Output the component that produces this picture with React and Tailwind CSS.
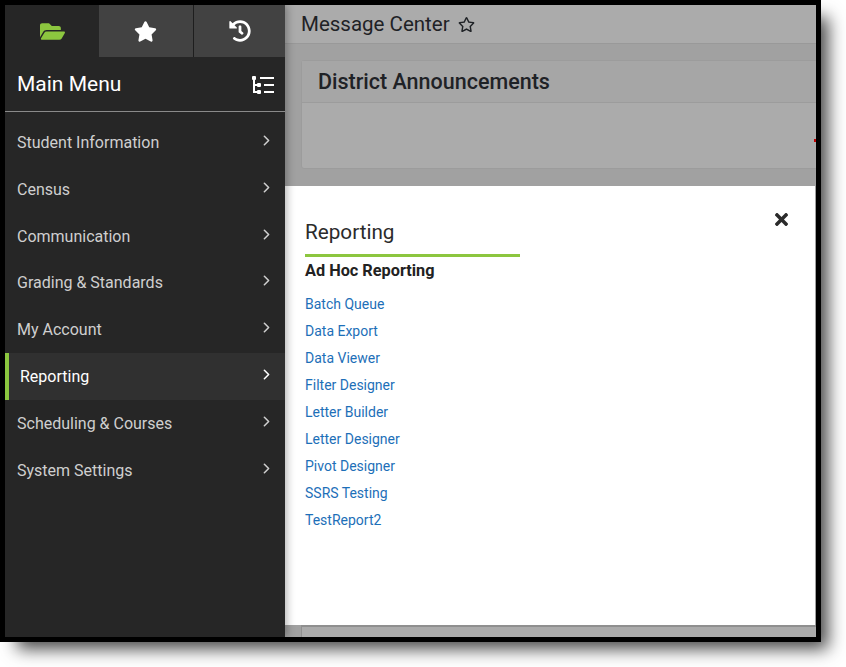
import { FaFolderOpen, FaStar, FaHistory, FaRegStar, FaTimes } from "react-icons/fa";
import { LuChevronRight } from "react-icons/lu";

const menuItems = [
  { label: "Student Information", height: "h-[47px]" },
  { label: "Census", height: "h-[47px]" },
  { label: "Communication", height: "h-[47px]" },
  { label: "Grading & Standards", height: "h-[46px]" },
  { label: "My Account", height: "h-[47px]" },
  { label: "Reporting", height: "h-[47px]" },
  { label: "Scheduling & Courses", height: "h-[47px]" },
  { label: "System Settings", height: "h-[47px]" },
];

const reportLinks = [
  "Batch Queue",
  "Data Export",
  "Data Viewer",
  "Filter Designer",
  "Letter Builder",
  "Letter Designer",
  "Pivot Designer",
  "SSRS Testing",
  "TestReport2",
];

function TreeListIcon() {
  return (
    <svg width="22" height="18" viewBox="0 0 22 18" fill="none" stroke="white" strokeWidth="2">
      <rect x="0" y="0" width="4" height="4" fill="white" stroke="none" rx="1" />
      <rect x="5" y="7" width="4" height="4" fill="white" stroke="none" rx="1" />
      <rect x="5" y="14" width="4" height="4" fill="white" stroke="none" rx="1" />
      <path d="M2 3V16H6M2 9H6" />
      <path d="M8 2H22M12 9H22M12 16H22" />
    </svg>
  );
}

function MenuRow({ label, height }) {
  const active = label === "Reporting";
  return (
    <div
      className={
        active
          ? `flex ${height} items-center justify-between border-l-4 border-[#8cc63f] bg-[#303030] pl-[11px] pr-[10px] text-white`
          : `flex ${height} items-center justify-between pl-[12px] pr-[10px] text-[#cfcfcf]`
      }
    >
      <span className="text-[16px]">{label}</span>
      <LuChevronRight size={17} strokeWidth={2.2} className="mb-[5px]" />
    </div>
  );
}

function Sidebar() {
  return (
    <div className="relative z-10 flex w-[280px] shrink-0 flex-col bg-[#262626] shadow-[2px_0_8px_rgba(0,0,0,0.3)]">
      <div className="flex h-[52px]">
        <div className="flex w-[94px] items-center justify-center">
          <FaFolderOpen size={25} color="#8cc63f" />
        </div>
        <div className="flex w-[95px] items-center justify-center border-r border-[#1e1e1e] bg-[#424242] pr-[2px]">
          <FaStar size={23} color="white" />
        </div>
        <div className="flex flex-1 items-center justify-center bg-[#424242]">
          <FaHistory size={22} color="white" />
        </div>
      </div>
      <div className="flex h-[55px] items-center justify-between border-b border-[#8a8a8a] pl-[12px] pr-[11px] pt-[2px]">
        <span className="text-[21px] text-white">Main Menu</span>
        <TreeListIcon />
      </div>
      <div className="pt-[7px]">
        {menuItems.map((item) => (
          <MenuRow key={item.label} label={item.label} height={item.height} />
        ))}
      </div>
    </div>
  );
}

function ReportingPanel() {
  return (
    <div className="absolute left-0 right-px top-[181px] h-[439px] bg-white pl-5 pt-[33px]">
      <FaTimes size={19} color="#2b2b2b" className="absolute right-[24px] top-[24px]" />
      <div className="w-[215px] border-b-[3px] border-[#8cc63f] pb-[8px] text-[20.7px] leading-[27px] text-[#2b2b2b]">
        Reporting
      </div>
      <div className="mt-[4px] text-[16.3px] font-bold leading-[19px] text-[#222222]">Ad Hoc Reporting</div>
      <div className="mt-[11px]">
        {reportLinks.map((link) => (
          <div key={link} className="h-[27px] text-[14px] leading-[27px] text-[#1d6fb8]">
            {link}
          </div>
        ))}
      </div>
    </div>
  );
}

export default function App() {
  return (
    <div className="h-[667px] w-[846px] overflow-hidden bg-white font-['Roboto',sans-serif]">
      <div className="flex h-[642px] w-[821px] overflow-hidden border-[5px] border-black shadow-[12px_12px_16px_-5px_rgba(0,0,0,0.72)]">
        <Sidebar />
        <div className="relative min-w-0 flex-1 overflow-hidden bg-[#a1a1a1]">
          <div className="flex h-[39px] items-center gap-[8px] border-b border-[#999999] bg-[#ababab] pl-[16px]">
            <span className="text-[20.5px] text-[#1f2226]">Message Center</span>
            <FaRegStar size={17} color="#1f2226" />
          </div>
          <div className="ml-[16px] mt-[16px] w-[600px] rounded-[3px] border border-[#9c9c9c] bg-[#ababab]">
            <div className="flex h-[42px] items-center border-b border-[#9c9c9c] bg-[#a6a6a6] pl-[16px] pt-[1px] text-[21.5px] font-medium text-[#1f2226]">
              District Announcements
            </div>
            <div className="h-[65px]" />
          </div>
          <div className="absolute right-0 top-[134px] h-[3px] w-[2px] bg-[#c00000]" />
          <ReportingPanel />
          <div className="absolute bottom-0 left-[16px] right-0 h-[12px] border-l border-t-2 border-[#8f8f8f] bg-[#ababab]" />
        </div>
      </div>
    </div>
  );
}
